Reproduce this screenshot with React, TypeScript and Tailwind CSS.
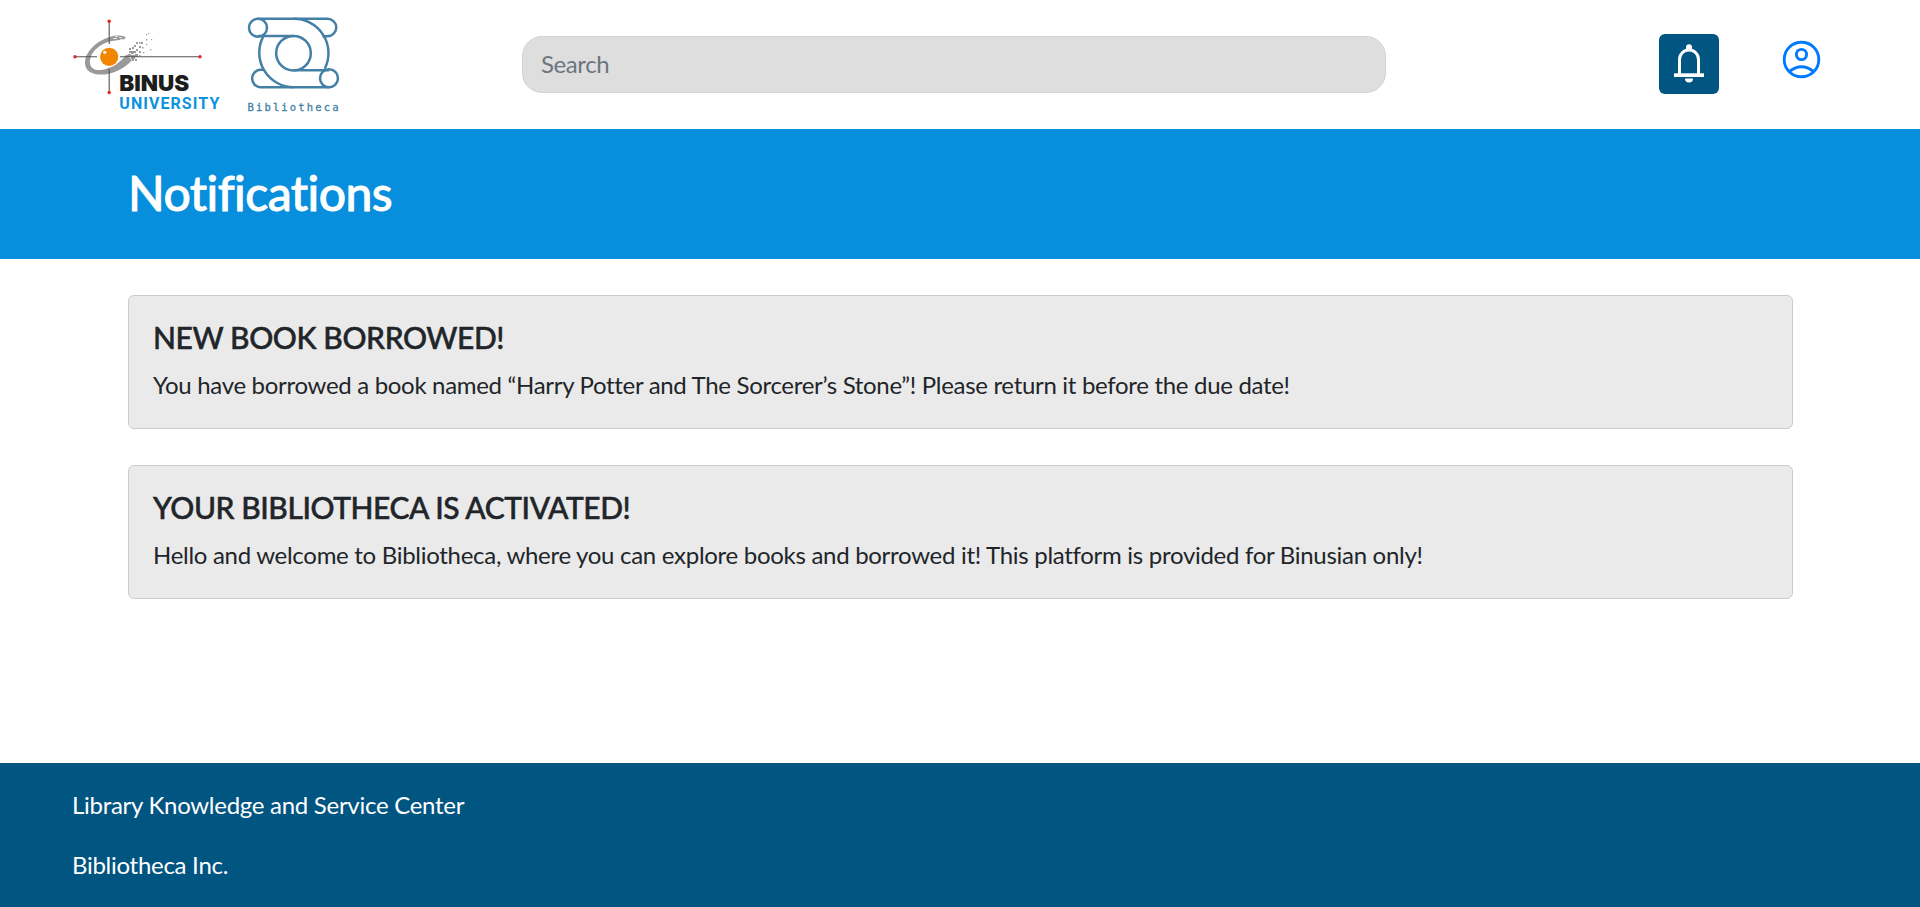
const notifications = [
  {
    title: "NEW BOOK BORROWED!",
    titleClass: "tracking-[-0.4px]",
    body: "You have borrowed a book named “Harry Potter and The Sorcerer’s Stone”! Please return it before the due date!",
    bodyClass: "tracking-[-0.31px]",
  },
  {
    title: "YOUR BIBLIOTHECA IS ACTIVATED!",
    titleClass: "tracking-[-0.44px]",
    body: "Hello and welcome to Bibliotheca, where you can explore books and borrowed it! This platform is provided for Binusian only!",
    bodyClass: "tracking-[-0.29px]",
  },
];

const pixels: [number, number, number][] = [
  [68, 49, 3], [71, 46, 3], [71, 50, 4], [67, 53, 3], [64, 54, 3], [75, 49, 3], [72, 42, 2],
  [76, 44, 2], [76, 37, 2], [79, 41, 2], [79, 46, 2], [81, 37, 2], [82, 42, 1.5], [75, 54, 2],
  [66, 50, 2], [69, 46, 2], [74, 46, 2], [72, 54, 2], [69, 43, 2], [74, 40, 2], [79, 37, 1.6],
  [86, 29, 1.2], [88, 28, 1], [86, 34, 1.4], [91, 34, 1.2], [86, 39, 1.2], [90, 44, 1.3], [83, 47, 1.3], [79, 50, 1.4],
];

function BinusLogo() {
  return (
    <svg width="170" height="120" viewBox="0 0 170 120" role="img" aria-label="Binus University">
      <path
        d="M66 33C64 30 56 30 50 32C36 36 25 47 25 58C25 68 36 71 48 69C58 67 67 61 72 55L66 50C60 58 50 64 41 65C33 65.5 29 62 30 55C31 46 41 38 52 36C57 35 62 35 66 33Z"
        fill="#999"
      />
      {pixels.map(([x, y, s]) => (
        <rect key={`${x}-${y}`} x={x} y={y} width={s} height={s} fill="#9b9b9b" />
      ))}
      <path d="M53 33.5h4M59 32.5h3M55 31.5h3M60 34.5h5" stroke="#e2e2e2" strokeWidth="1" />
      <path d="M49.2 17V39M49.2 64V87M15 51.8H37M60 51.8H139" stroke="#555" strokeWidth="1.1" />
      <g fill="#e5231b">
        <circle cx="49.2" cy="16.2" r="1.7" />
        <circle cx="49.2" cy="87.5" r="1.7" />
        <circle cx="15" cy="51.8" r="1.7" />
        <circle cx="140" cy="51.8" r="1.7" />
      </g>
      <circle cx="49.2" cy="51.8" r="10.3" fill="#fff" />
      <circle cx="49.2" cy="51.8" r="9.1" fill="#f18700" />
      <circle cx="44.8" cy="47.3" r="1.6" fill="#fff" />
      <text x="59.3" y="85.5" fontFamily="Inter, sans-serif" fontWeight="900" fontSize="22" textLength="70" lengthAdjust="spacingAndGlyphs" fill="#1d1d1b">BINUS</text>
      <text x="59.3" y="104" fontFamily="Roboto, sans-serif" fontWeight="700" fontSize="16" textLength="100" fill="#0d92dc">UNIVERSITY</text>
    </svg>
  );
}

function BibliothecaLogo() {
  return (
    <svg width="120" height="120" viewBox="0 0 120 120" fill="none" role="img" aria-label="Bibliotheca">
      <g stroke="#447fa6" strokeWidth="2.5" transform="translate(0 0.7)">
        <circle cx="23" cy="22" r="9" />
        <circle cx="94" cy="72.5" r="9" />
        <circle cx="58.5" cy="47.5" r="17.3" />
        <path d="M23 13H92.5A8.8 8.8 0 0 1 92.5 30.6H87.5" />
        <path d="M23 30.3H58.5" />
        <path d="M58.5 13A34.5 34.5 0 0 1 89.8 63" />
        <path d="M28.2 31A34.5 34.5 0 0 0 58.5 81.5" />
        <path d="M58.5 64.5H94" />
        <path d="M94 81.5H25A8.8 8.8 0 0 1 25 64H29" />
      </g>
      <text x="12.5" y="106" fontFamily="'DejaVu Sans Mono', monospace" fontSize="10.5" textLength="91" fill="#447fa6" stroke="#447fa6" strokeWidth="0.3">Bibliotheca</text>
    </svg>
  );
}

function BellIcon() {
  return (
    <svg width="60" height="60" viewBox="0 0 60 60" fill="none">
      <path d="M20.5 41V25.5A9.5 9.5 0 0 1 39.5 25.5V41" stroke="#fff" strokeWidth="3" />
      <path d="M27 16V13.3A3 3 0 0 1 33 13.3V16Z" fill="#fff" />
      <path d="M15 39.3H45V43H15Z" fill="#fff" />
      <path d="M26 44.5H34A4 4 0 0 1 26 44.5Z" fill="#fff" />
    </svg>
  );
}

function AccountIcon() {
  return (
    <svg width="40" height="40" viewBox="0 0 40 40" fill="none" stroke="#007bff" strokeWidth="2.9">
      <circle cx="20.5" cy="20.5" r="17.3" />
      <circle cx="20.5" cy="15.5" r="5.1" />
      <path d="M8.5 32.5Q20.5 23 32.5 32.5" />
    </svg>
  );
}

export default function App() {
  return (
    <div className="flex h-[907px] flex-col bg-white font-[Lato,sans-serif] text-2xl text-[#212529]">
      <header className="flex h-[129px] shrink-0 items-start">
        <div className="ml-[60px] flex gap-[5px] pt-[5px]">
          <BinusLogo />
          <BibliothecaLogo />
        </div>
        <input
          placeholder="Search"
          className="mt-9 ml-[167px] h-[57px] w-[864px] rounded-[20px] border border-[#ced4da] bg-[#dedede] px-[18px] pb-0.5 tracking-[-0.4px] placeholder:text-[#6c757d]"
        />
        <button className="mt-[34px] ml-[273px] size-[60px] rounded-md bg-[#015581]" aria-label="Notifications">
          <BellIcon />
        </button>
        <button className="mt-[39px] ml-[62px]" aria-label="Account">
          <AccountIcon />
        </button>
      </header>
      <section className="flex h-[130px] shrink-0 items-center bg-[#078edc] px-32 pb-[3px]">
        <h1 className="text-[48px] leading-none font-medium tracking-[-0.55px] text-white [-webkit-text-stroke:0.8px_currentColor]">
          Notifications
        </h1>
      </section>
      <main className="flex grow flex-col gap-9 px-32 pt-9">
        {notifications.map((n) => (
          <article key={n.title} className="mr-[-1px] h-[134px] rounded-md border border-[#cbcbcb] bg-[#eaeaea] px-6 pt-[23px]">
            <h2 className={`text-[30px] leading-9 font-medium whitespace-nowrap [-webkit-text-stroke:0.5px_currentColor] ${n.titleClass}`}>
              {n.title}
            </h2>
            <p className={`mt-3 leading-9 whitespace-nowrap ${n.bodyClass}`}>{n.body}</p>
          </article>
        ))}
      </main>
      <footer className="flex h-36 shrink-0 flex-col gap-6 bg-[#015581] px-[72px] pt-6 leading-9 tracking-[-0.28px] text-white">
        <p>Library Knowledge and Service Center</p>
        <p>Bibliotheca Inc.</p>
      </footer>
    </div>
  );
}
